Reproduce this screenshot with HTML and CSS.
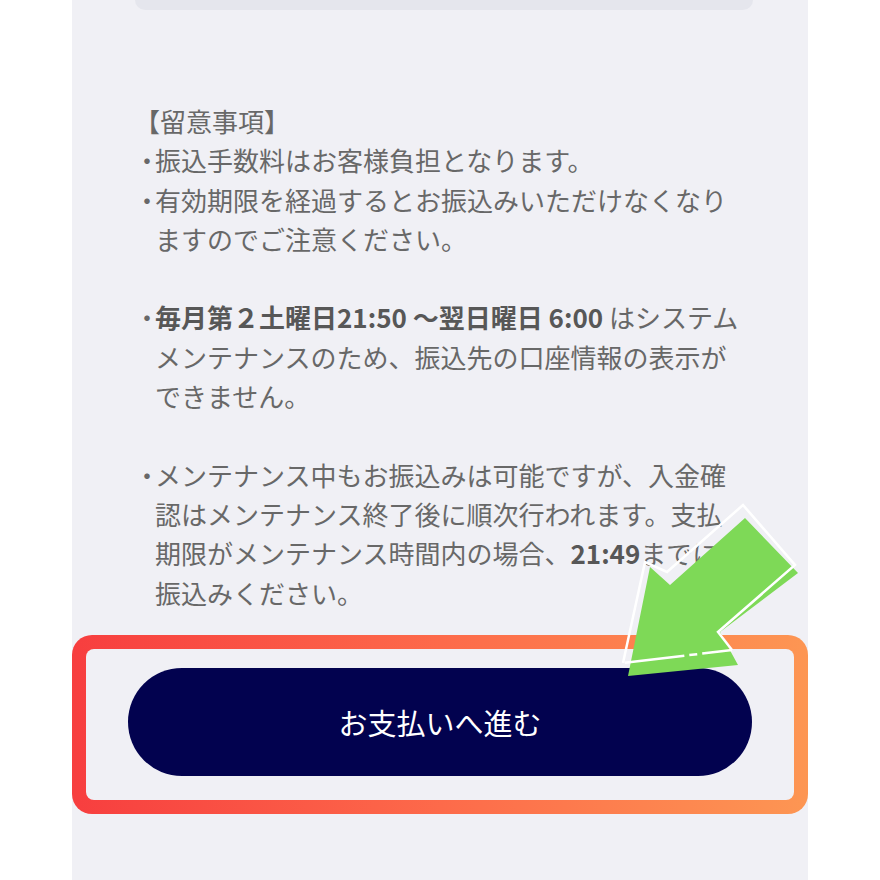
FILE: index.html
```html
<!DOCTYPE html>
<html lang="ja">
<head>
    <meta charset="UTF-8">
    <meta name="viewport" content="width=device-width, initial-scale=1.0">
    <title>お支払い</title>
    <link rel="stylesheet" href="styles.css">
</head>
<body>
    <div class="panel">
        <div class="summary-card"></div>

        <div class="notes">
            <p class="notes-title">【留意事項】</p>
            <ul class="notes-list">
                <li>振込手数料はお客様負担となります。</li>
                <li>有効期限を経過するとお振込みいただけなくなりますのでご注意ください。</li>
            </ul>
            <ul class="notes-list">
                <li><b>毎月第２土曜日21:50 〜翌日曜日 6:00</b> はシステムメンテナンスのため、振込先の口座情報の表示ができません。</li>
            </ul>
            <ul class="notes-list">
                <li>メンテナンス中もお振込みは可能ですが、入金確認はメンテナンス終了後に順次行われます。支払期限がメンテナンス時間内の場合、<b>21:49</b>までにお振込みください。</li>
            </ul>
        </div>

        <div class="cta-frame">
            <div class="cta-inner">
                <button class="cta">お支払いへ進む</button>
            </div>
            <!-- 指差し矢印 -->
            <svg class="pointer" width="180" height="180" viewBox="0 0 180 180">
                <polygon points="125,18 178,73 100,132 118,165 8,176 30,67 50,85" fill="#7ed957"/>
                <polyline points="3,163 25,62 47,72 123,5 175,65 98,132 112,150" fill="none" stroke="#fff" stroke-width="2.5" stroke-linejoin="miter"/>
                <line x1="112" y1="150" x2="3" y2="163" stroke="#fff" stroke-width="2.5" stroke-dasharray="30 5 8 5 60 6"/>
            </svg>
        </div>
    </div>
</body>
</html>
```

FILE: styles.css
```css
:root {
    --panel-bg: #f0f0f5;
    --text-color: #686868;
    --navy: #02024f;
}

body {
    margin: 0;
    background-color: #fff;
    font-family: 'Noto Sans CJK JP', 'Noto Sans', sans-serif;
}

.panel {
    width: 736px;
    min-height: 880px;
    margin: 0 auto;
    padding: 0 55px 0 62px;
    box-sizing: border-box;
    background-color: var(--panel-bg);
    overflow: hidden;
}

.summary-card {
    height: 10px;
    margin-left: 1px;
    background-color: #e5e6ed;
    border-radius: 0 0 10px 10px;
}

.notes {
    width: 611px;
    margin-top: 91px;
    color: var(--text-color);
    font-size: 26px;
    line-height: 39.3px;
}

.notes p,
.notes ul {
    margin: 0;
    padding: 0;
    list-style: none;
}

.notes ul + ul {
    margin-top: 39.3px;
}

.notes-list li {
    padding-left: 21px;
    text-indent: -21px;
}

.notes-list li::before {
    content: '・';
    display: inline-block;
    width: 21px;
    text-indent: 0;
}

.notes b {
    color: #575757;
    font-weight: bold;
}

.cta-frame {
    position: relative;
    margin: 23px -55px 0 -62px;
    padding: 14px;
    border-radius: 20px;
    background: linear-gradient(90deg, #f73e3f, #fd6a4a 50%, #fd9653);
}

.cta-inner {
    padding: 19px 42px 24px;
    border-radius: 8px;
    background-color: var(--panel-bg);
}

.cta {
    display: block;
    width: 100%;
    height: 108px;
    border: none;
    border-radius: 54px;
    background-color: var(--navy);
    color: #fff;
    font-family: inherit;
    font-size: 29px;
    cursor: pointer;
}

.pointer {
    position: absolute;
    left: 548px;
    top: -135px;
}
```
